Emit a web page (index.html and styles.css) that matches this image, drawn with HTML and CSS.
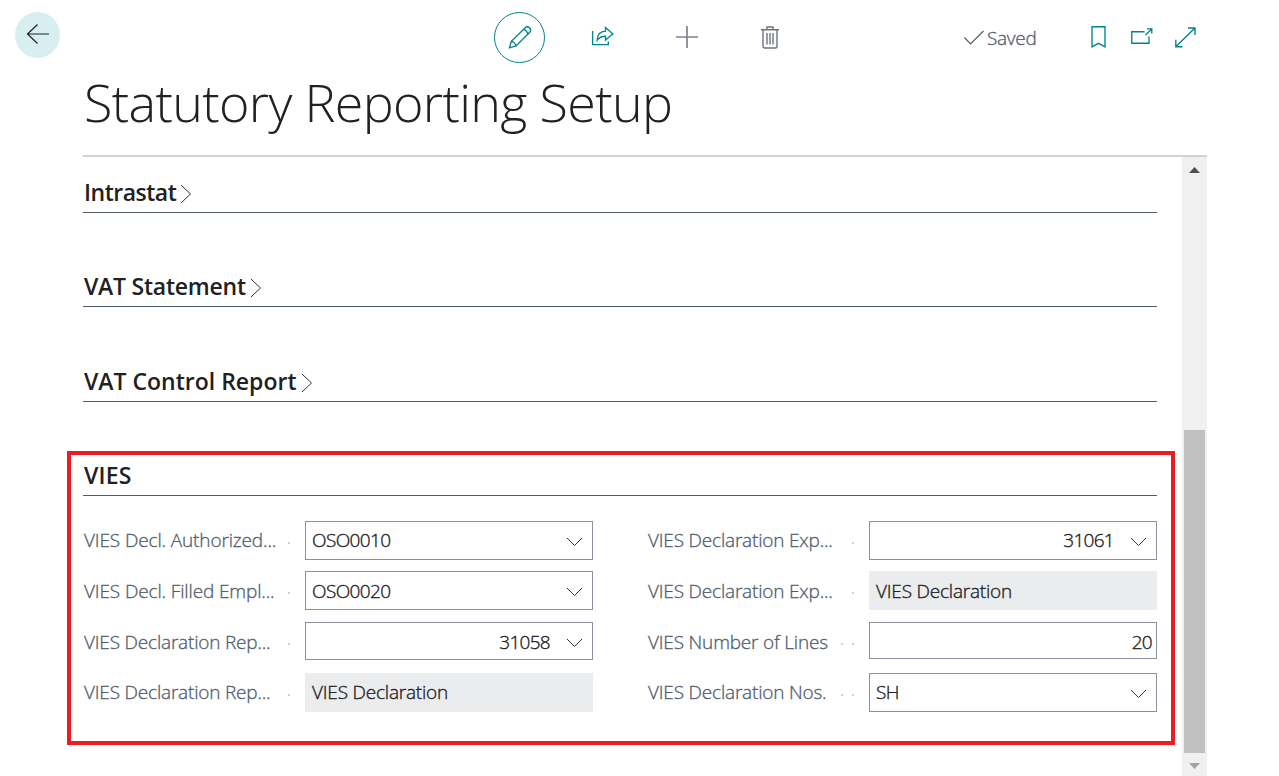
FILE: index.html
```html
<!DOCTYPE html>
<html lang="en">
<head>
<meta charset="utf-8">
<title>Statutory Reporting Setup</title>
<link rel="stylesheet" href="styles.css">
</head>
<body>
<header class="topbar">
  <div class="back"><svg width="45" height="46" viewBox="0 0 45 46"><path d="M34 22H12.5M22.500 12.500L12.500 22L22.500 31.500" fill="none" stroke="#222" stroke-width="1.2"/></svg></div>
  <div class="edit"><svg width="49" height="49" viewBox="0 0 49 49"><path d="M14.500 34.800L16.300 28.300L30.500 14.500Q32.500 12.800 34.800 15Q36.500 17.300 34.800 19.300L21 33ZM16.300 28.300Q20 29 21 33M28.600 16.300Q32 17.500 33 21" class="line"/></svg></div>
  <svg class="share" width="24" height="24" viewBox="0 0 24 24"><path d="M1.600 6V19.600H17.300V16.500M6.200 15.200Q6.500 6.500 14.500 6.200V2.500L21.800 9L14.500 15V11.200Q9 11.200 6.200 15.200Z" class="line"/></svg>
  <svg class="plus" width="22" height="22" viewBox="0 0 22 22"><path d="M0 11H22M11 0V22" fill="none" stroke="#7d838e" stroke-width="1.700"/></svg>
  <svg class="trash" width="18" height="23" viewBox="0 0 18 23"><path d="M0 3.800H18M6 3.500V1H12V3.500M2 4V20.500Q2 22 3.500 22H14.500Q16 22 16 20.500V4M6 7V18.500M9 7V18.500M12 7V18.500" fill="none" stroke="#6d7480" stroke-width="1.400"/></svg>
  <div class="saved"><svg width="20" height="16" viewBox="0 0 20 16"><path d="M.5 7.500L6.500 14L19.500 1" fill="none" stroke="#505c6d" stroke-width="1.200"/></svg><span>Saved</span></div>
  <svg class="bookmark" width="15" height="22" viewBox="0 0 15 22"><path d="M1 .7H14V20.800L7.500 17.300L1 20.800Z" class="line"/></svg>
  <svg class="popout" width="22" height="17" viewBox="0 0 22 17"><path d="M13.500 3.700H.8V15.200H18V8.500M14.500 7L20.500 1.200M16 .9H20.800V5.500" class="line"/></svg>
  <svg class="expand" width="21" height="21" viewBox="0 0 21 21"><path d="M1 19.500L19.700 1.200M13 1H20V8M.8 12.800V19.700H7.500" class="line"/></svg>
</header>
<h1 class="title"><span>Statutory Reporting Setup</span></h1>
<main class="pane">
  <div class="content">
    <h2 class="section s1"><span class="t1">Intrastat</span><svg width="12" height="20" viewBox="0 0 12 20"><path d="M1 1L10.500 10L1 19" class="chev"/></svg></h2>
    <h2 class="section s2"><span class="t2">VAT Statement</span><svg width="12" height="20" viewBox="0 0 12 20"><path d="M1 1L10.500 10L1 19" class="chev"/></svg></h2>
    <h2 class="section s3"><span class="t3">VAT Control Report</span><svg width="12" height="20" viewBox="0 0 12 20"><path d="M1 1L10.500 10L1 19" class="chev"/></svg></h2>
    <section class="vies">
      <h2 class="section s4"><span class="t4">VIES</span></h2>
      <div class="fields">
        <div class="row"><span class="label l1">VIES Decl. Authorized...</span><i class="dots"></i><div class="box"><span class="code">OSO0010</span><svg class="down" width="17" height="10" viewBox="0 0 17 10"><path d="M1 1L8.500 8.500L16 1" class="chev"/></svg></div></div>
        <div class="row"><span class="label">VIES Declaration Exp...</span><i class="dots"></i><div class="box num"><span class="digits">31061</span><svg class="down" width="17" height="10" viewBox="0 0 17 10"><path d="M1 1L8.500 8.500L16 1" class="chev"/></svg></div></div>
        <div class="row lower"><span class="label l1">VIES Decl. Filled Empl...</span><i class="dots"></i><div class="box"><span class="code">OSO0020</span><svg class="down" width="17" height="10" viewBox="0 0 17 10"><path d="M1 1L8.500 8.500L16 1" class="chev"/></svg></div></div>
        <div class="row lower"><span class="label">VIES Declaration Exp...</span><i class="dots"></i><div class="box readonly"><span class="decl">VIES Declaration</span></div></div>
        <div class="row lower"><span class="label">VIES Declaration Rep...</span><i class="dots"></i><div class="box num short"><span class="digits">31058</span><svg class="down" width="17" height="10" viewBox="0 0 17 10"><path d="M1 1L8.500 8.500L16 1" class="chev"/></svg></div></div>
        <div class="row lower"><span class="label">VIES Number of Lines</span><i class="dots two"></i><div class="box num plain"><span class="digits">20</span></div></div>
        <div class="row"><span class="label">VIES Declaration Rep...</span><i class="dots"></i><div class="box readonly"><span class="decl">VIES Declaration</span></div></div>
        <div class="row"><span class="label">VIES Declaration Nos.</span><i class="dots two"></i><div class="box"><span class="code">SH</span><svg class="down" width="17" height="10" viewBox="0 0 17 10"><path d="M1 1L8.500 8.500L16 1" class="chev"/></svg></div></div>
      </div>
    </section>
  </div>
  <div class="scrollbar"><svg width="11" height="6" viewBox="0 0 11 6"><path d="M0 6L5.500 0L11 6Z" fill="#505050"/></svg><div class="thumb"></div><svg class="arrow-down" width="11" height="6" viewBox="0 0 11 6"><path d="M0 0H11L5.500 6Z" fill="#a3a3a3"/></svg></div>
</main>
</body>
</html>
```
FILE: styles.css
```css
* { box-sizing: border-box; }
body { margin: 0; width: 1279px; height: 776px; overflow: hidden; background: #fff; color: #212121; font-family: "Open Sans", "Noto Sans", sans-serif; }
svg { display: block; flex: none; }
h1, h2 { margin: 0; }
.line { fill: none; stroke: #00848a; stroke-width: 1.35; }
.chev { fill: none; stroke: #33303f; stroke-width: 1; }
.topbar { display: flex; align-items: flex-start; height: 74px; padding: 12px 0 0 15px; }
.back { width: 45px; height: 46px; border-radius: 50%; background: #d8eff1; }
.edit { width: 51px; height: 51px; margin-left: 434px; border: 1px solid #00848a; border-radius: 50%; }
.share { margin: 13px 0 0 46px; }
.plus { margin: 14px 0 0 61px; }
.trash { margin: 14px 0 0 63px; }
.saved { display: flex; align-items: center; gap: 3px; width: 127px; height: 26px; margin: 13px 0 0 185px; color: #505c6d; font-size: 19px; font-weight: 300; letter-spacing: -.3px; -webkit-text-stroke: .3px; }
.bookmark { margin: 14px 0 0; }
.popout { margin: 16px 0 0 25px; }
.expand { margin: 15px 0 0 22px; }
.title { height: 81px; padding-left: 84px; font-size: 52px; line-height: 56px; font-weight: 300; letter-spacing: -.64px; white-space: nowrap; }
.pane { display: flex; justify-content: space-between; width: 1124px; height: 621px; margin-left: 83px; border-top: 2px solid #ced3d8; }
.content { width: 1074px; }
.section { display: flex; align-items: flex-end; gap: 4px; border-bottom: 1px solid #505c6d; padding: 0 0 4px 1px; font-size: 23px; line-height: 32px; font-weight: 600; white-space: nowrap; }
.section svg { margin-bottom: 4px; }
.t1 { letter-spacing: -.5px; }
.t2 { letter-spacing: -.23px; }
.t4 { letter-spacing: .2px; }
.s1 { height: 56px; }
.s2 { height: 94px; }
.s3 { height: 95px; }
.s4 { height: 41px; }
.vies { width: 1108px; height: 294px; margin: 49px 0 0 -16px; padding: 0 14px 0 12px; border: 4px solid #ed1c24; }
.fields { display: grid; grid-template-columns: 510px 510px; column-gap: 54px; grid-template-rows: 50px 51px 51px 39px; padding-top: 25px; font-size: 19px; }
.row { display: flex; align-items: flex-start; height: 39px; white-space: nowrap; }
.label { width: 205px; height: 39px; padding-left: 1px; line-height: 38px; font-weight: 300; letter-spacing: -.19px; color: #505c6d; -webkit-text-stroke: .3px; }
.l1 { letter-spacing: -.13px; }
.dots { width: 2px; height: 2px; margin: 21px 15px 0 0; background: #d0d3d8; }
.two { box-shadow: -11px 0 #d0d3d8; }
.box { display: flex; align-items: flex-start; justify-content: space-between; width: 288px; height: 39px; padding: 0 9px 0 6px; border: 1px solid #8b929e; line-height: 36px; font-weight: 300; color: #212121; -webkit-text-stroke: .35px; }
.down { margin-top: 15px; }
.lower .label { line-height: 40px; }
.lower .box { line-height: 38px; }
.code { letter-spacing: -.6px; }
.digits { letter-spacing: -.7px; }
.decl { letter-spacing: -.2px; }
.num { justify-content: flex-end; gap: 16px; }
.short { height: 38px; }
.plain { height: 37px; padding-right: 4px; }
.readonly { border-color: #ebecee; background: #ebecee; }
.scrollbar { display: flex; flex-direction: column; align-items: center; width: 25px; padding-top: 10px; background: #f0f0f0; }
.thumb { width: 21px; height: 323px; margin-top: 257px; background: #c0c0c0; }
.arrow-down { margin-top: 10px; }
```
